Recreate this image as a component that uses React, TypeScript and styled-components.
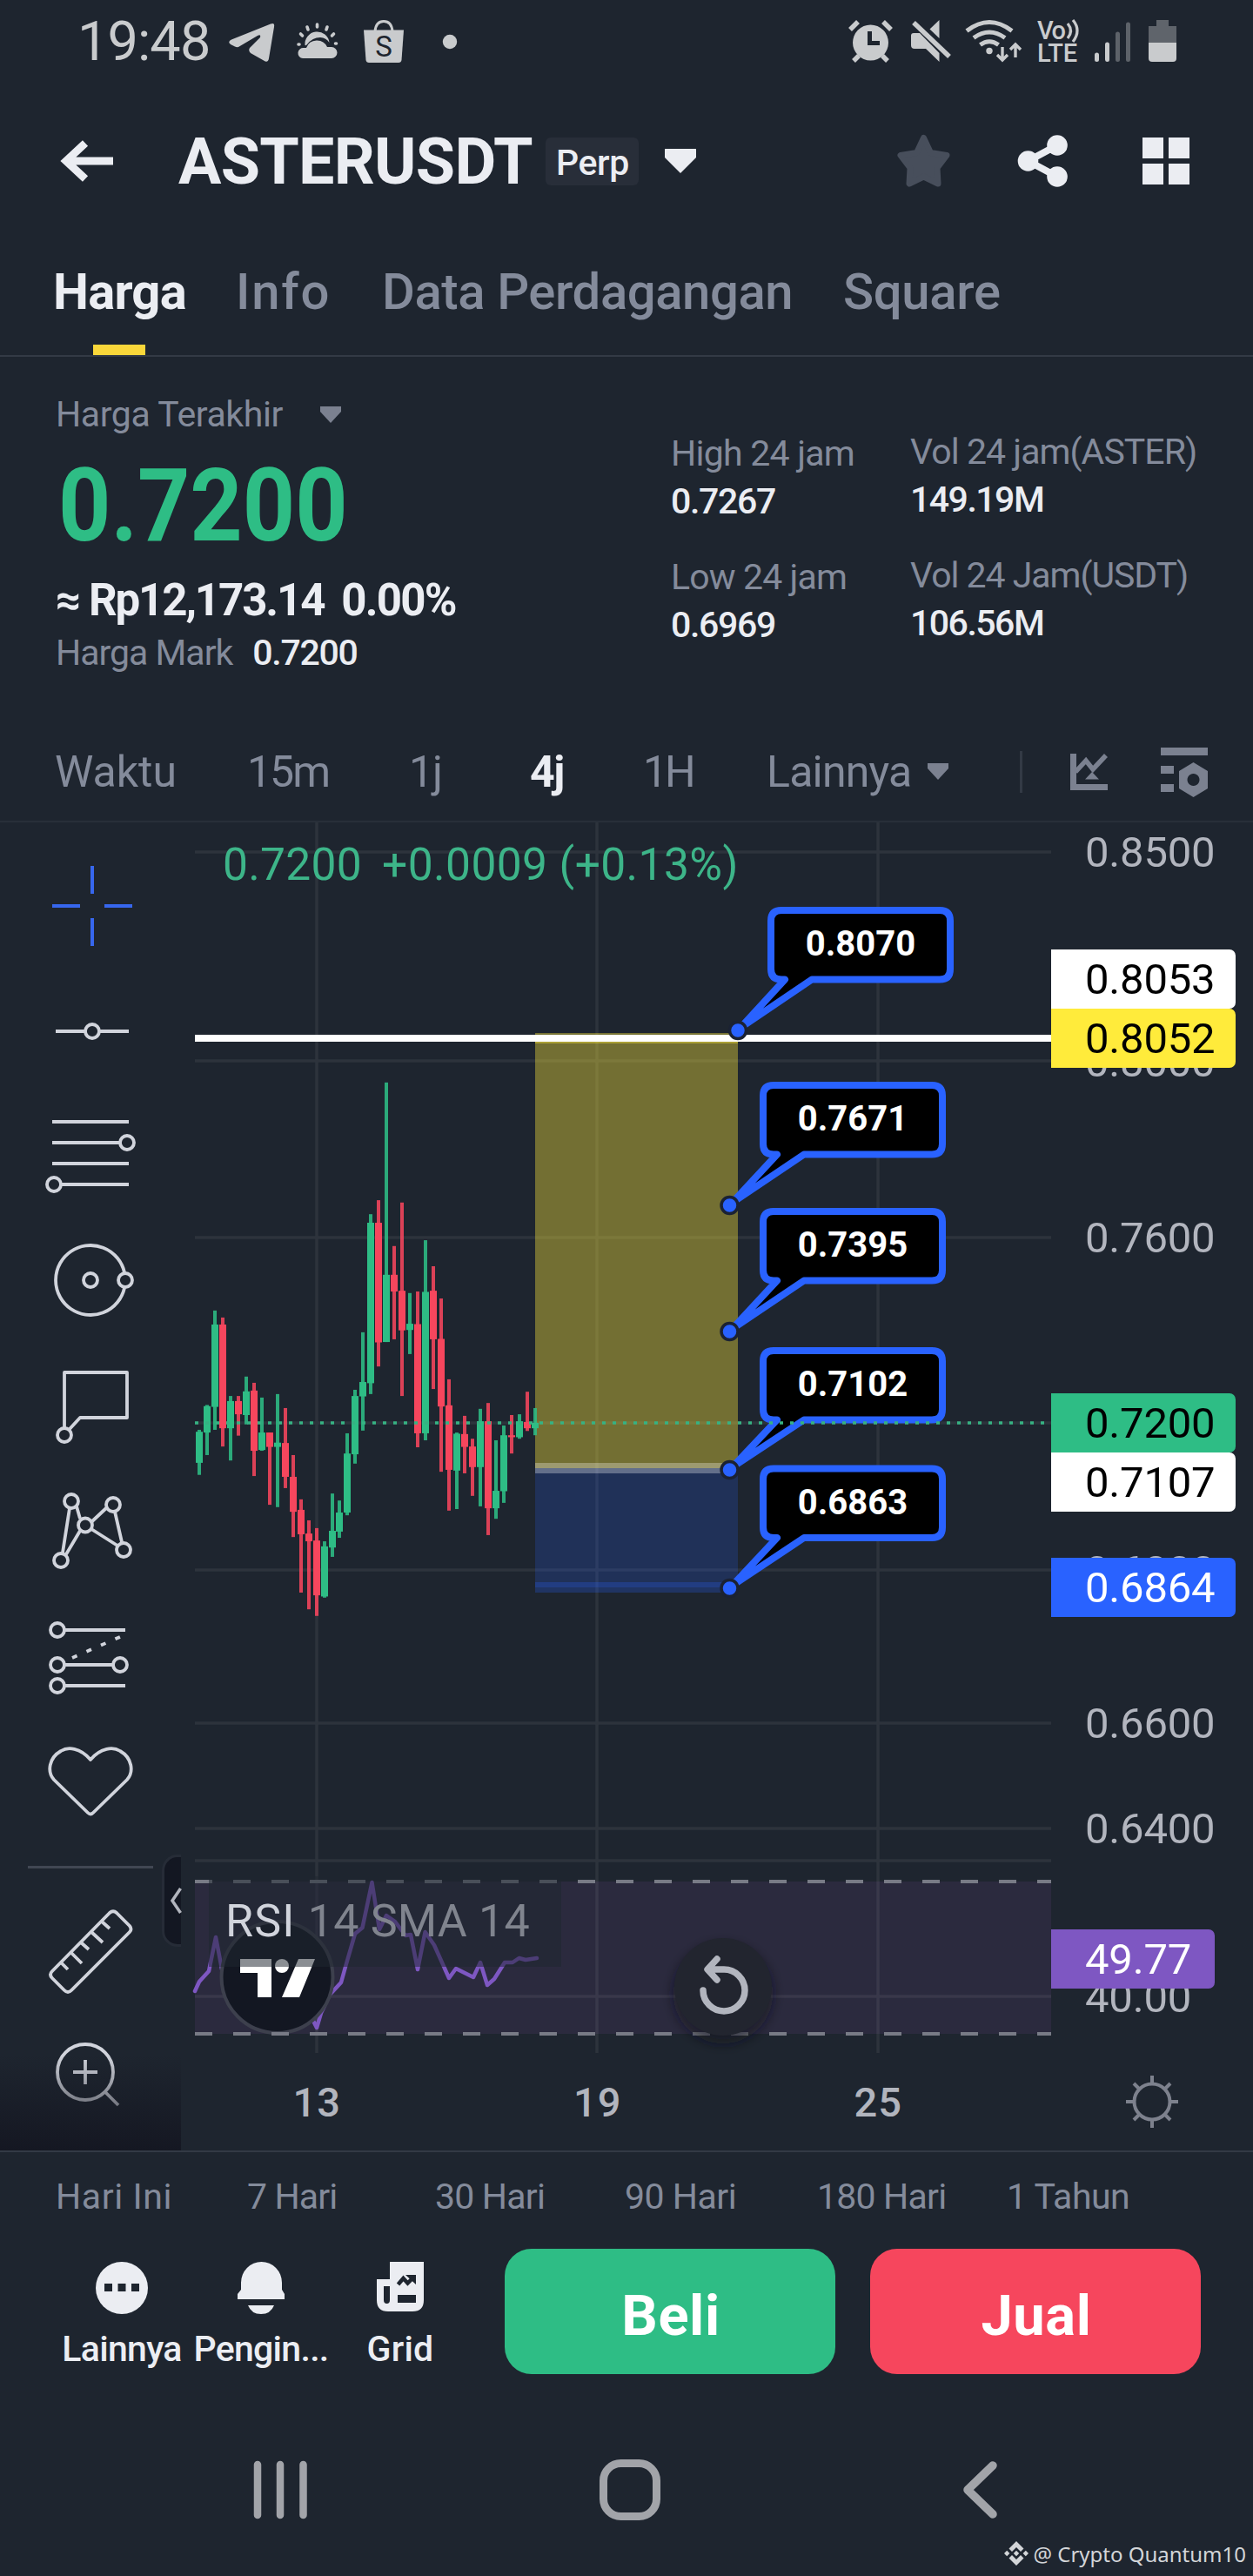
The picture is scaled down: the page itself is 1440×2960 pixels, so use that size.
import React from 'react';
import styled, { createGlobalStyle } from 'styled-components';

const c = {
  bg: '#1e252f',
  text: '#ebedf2',
  muted: '#848b9b',
  status: '#c9cbcd',
  line: '#333a45',
  up: '#2ebd85',
  down: '#f6465d',
  blue: '#2962ff',
  tool: '#d1d4dc',
  axis: '#b2b5be',
};

const GlobalStyle = createGlobalStyle`
  * { box-sizing: border-box; }
  body { margin: 0; background: ${c.bg}; }
`;

const Screen = styled.main`
  width: 1440px;
  height: 2960px;
  display: flex;
  flex-direction: column;
  overflow: hidden;
  background: ${c.bg};
  color: ${c.text};
  font-family: Roboto, "Liberation Sans", sans-serif;
  white-space: pre;
`;

const Label = styled.span<{ $size: number; $weight?: number; $ls?: number; $color?: string }>`
  font-size: ${(p) => p.$size}px;
  font-weight: ${(p) => p.$weight ?? 400};
  letter-spacing: ${(p) => p.$ls ?? 0}px;
  color: ${(p) => p.$color ?? c.text};
  line-height: 1;
`;

const Svg = styled.svg<{ $ml?: number }>`
  display: block;
  flex: none;
  overflow: visible;
  margin-left: ${(p) => p.$ml ?? 0}px;
`;

type GlyphProps = { box: [number, number, number, number]; ml?: number; children: React.ReactNode };
const Glyph = ({ box, ml, children }: GlyphProps) => (
  <Svg width={box[2]} height={box[3]} viewBox={box.join(' ')} $ml={ml} fill="none">
    {children}
  </Svg>
);

/* ---------- status bar ---------- */

const StatusBar = styled.header`
  height: 96px;
  display: flex;
  align-items: center;
  padding: 0 88px 0 89px;
`;
const Clock = styled.time`
  width: 174px;
  font-size: 63px;
  line-height: 96px;
  letter-spacing: -0.9px;
  color: ${c.status};
`;
const Spacer = styled.div`
  flex: 1;
`;

const Status = () => (
  <StatusBar>
    <Clock>19:48</Clock>
    <Glyph box={[263, 23, 52, 50]}>
      <path fill={c.status} d="M311 27.5 Q316 25.500 315 31 L309 67 Q308 73 303 69.500 L288 61 Q285 58 287 55 L299 43 Q300 39 296 41 L274 54 Q272 54.500 270 53.500 L265 51 Q261 48 266 45.500 Z" />
    </Glyph>
    <Glyph box={[341, 23, 49, 50]} ml={26}>
      <path fill={c.status} d="M348 67 A6 6 0 0 1 349 55 H352 A13 13 0 0 1 376 54 H381 A6.500 6.500 0 0 1 381 67 Z" />
      <path fill={c.status} d="M350.500 52 A14 14 0 0 1 378.500 49 Q375 43.500 368 43 Q359 43 353 51 Q352 52.500 350.500 52 Z" />
      <path stroke={c.status} strokeWidth="3.600" strokeLinecap="round" d="M364.500 28 V31 M353 31 L354 34 M376 31 L375 34 M345.500 39 L347.500 41 M383.500 39 L381.500 41 M343 51 H344 M385.500 50 H386.500" />
    </Glyph>
    <Glyph box={[417, 21, 47, 54]} ml={27}>
      <path fill={c.status} d="M418 34.500 H464 L461.500 69 Q461 72 458 72 H424 Q421 72 420.500 69 Z" />
      <path stroke={c.status} strokeWidth="3" d="M431 36 Q432 24.500 441 24.500 Q450 24.500 451 36" />
      <text x="441" y="65" textAnchor="middle" fill={c.bg} fontSize="33" fontFamily="Roboto">S</text>
    </Glyph>
    <Glyph box={[508, 30, 18, 34]} ml={44}>
      <circle cx="517" cy="47" r="8.200" fill={c.status} />
    </Glyph>
    <Spacer />
    <Glyph box={[974, 22, 53, 52]}>
      <circle cx="1000.500" cy="49" r="20.500" fill={c.status} />
      <path stroke={c.status} strokeWidth="5.500" d="M977 34 L986 25 M1015 25 L1024 34 M987 64 L981 70 M1014 64 L1020 70" />
      <path stroke={c.bg} strokeWidth="5" d="M999.500 36 V49.500 H1011" />
    </Glyph>
    <Glyph box={[1047, 22, 46, 52]} ml={20}>
      <path fill={c.status} d="M1047 41 Q1047 38 1050 38 H1057 L1079.500 61 V71 L1064 56 H1051 Q1047 56 1047 52 Z" />
      <path fill={c.status} d="M1068.500 33.500 L1079.500 23 V44 Z" />
      <path stroke={c.status} strokeWidth="5.500" d="M1050 26 L1091 65" />
    </Glyph>
    <Glyph box={[1109, 22, 66, 52]} ml={16}>
      <path stroke={c.status} strokeWidth="5" d="M1111 35.500 Q1137 15.500 1163 35.500 M1119 43.500 Q1137 30.500 1155 43.500 M1126.500 51.500 Q1137 44 1147.500 51.500" />
      <circle cx="1137" cy="58.500" r="3.700" fill={c.status} />
      <path stroke={c.status} strokeWidth="3.400" d="M1152 54 V68 M1146 63 L1152 69 L1158 63 M1167 66 V52 M1161 57 L1167 51 L1173 57" />
    </Glyph>
    <Glyph box={[1191, 22, 50, 52]} ml={16}>
      <g fill={c.status} fontFamily="Roboto" fontSize="29" fontWeight="500">
        <text x="1192" y="44.500" letterSpacing="-1.500">Vo</text>
        <text x="1192" y="71">LTE</text>
      </g>
      <path stroke={c.status} strokeWidth="3.200" d="M1227 27 Q1234 35.500 1227 44 M1233 23 Q1243 35 1233 48" />
    </Glyph>
    <Glyph box={[1257, 22, 44, 52]} ml={16}>
      <path stroke={c.status} strokeWidth="5" strokeLinecap="round" d="M1260.500 63 V68.500 M1272.500 51 V68.500" />
      <path stroke="#5d6269" strokeWidth="5" strokeLinecap="round" d="M1284.500 39 V68.500 M1296.500 28 V68.500" />
    </Glyph>
    <Glyph box={[1320, 22, 32, 52]} ml={19}>
      <path fill="#5f646b" d="M1329 23 H1343 V30 H1352 V49 H1320 V30 H1329 Z" />
      <path fill={c.status} d="M1320 49 H1352 V67 Q1352 71 1348 71 H1324 Q1320 71 1320 67 Z" />
    </Glyph>
  </StatusBar>
);

/* ---------- title bar and tabs ---------- */

const TitleBar = styled.div`
  height: 178px;
  display: flex;
  align-items: center;
  padding: 0 73px 0 70px;
`;
const Pair = styled.h1`
  margin: 0 0 0 75px;
  padding-top: 2px;
  width: 422px;
  font-size: 73.5px;
  font-weight: 700;
  letter-spacing: -0.7px;
  line-height: 90px;
`;
const Badge = styled.div`
  width: 107px;
  height: 55px;
  padding-left: 12px;
  padding-top: 5px;
  display: flex;
  align-items: center;
  border-radius: 6px;
  background: #282e39;
`;

const Title = () => (
  <TitleBar>
    <Glyph box={[70, 160, 60, 48]}>
      <path stroke={c.text} strokeWidth="9" d="M130 184 H77 M98 163.500 L76 184 L98 204.500" />
    </Glyph>
    <Pair>ASTERUSDT</Pair>
    <Badge>
      <Label $size={41} $weight={500} $ls={-0.4}>Perp</Label>
    </Badge>
    <Glyph box={[764, 170, 36, 28]} ml={30}>
      <path fill={c.text} d="M764 170 H800 V180 L782 198 L764 180 Z" />
    </Glyph>
    <Spacer />
    <Glyph box={[1031, 153, 61, 62]}>
      <path fill="#474e5b" stroke="#474e5b" strokeWidth="7" strokeLinejoin="round" d="M1061.500 157.500 L1069.500 174.500 L1088 177.500 L1077 192 L1078 210 L1061.500 202 L1045 210 L1046 192 L1035 177.500 L1053.500 174.500 Z" />
    </Glyph>
    <Glyph box={[1169, 153, 59, 62]} ml={77}>
      <circle cx="1181.500" cy="184" r="11.800" fill={c.text} />
      <circle cx="1215" cy="166" r="11.800" fill={c.text} />
      <circle cx="1215" cy="202" r="11.800" fill={c.text} />
      <path stroke={c.text} strokeWidth="8" d="M1215 166 L1181.500 184 L1215 202" />
    </Glyph>
    <Glyph box={[1313, 157, 54, 54]} ml={85}>
      <path fill={c.text} d="M1313 157 h24 v24 h-24 Z M1343 157 h24 v24 h-24 Z M1313 187 h24 v24 h-24 Z M1343 187 h24 v24 h-24 Z" />
    </Glyph>
  </TitleBar>
);

const Tabs = styled.nav`
  height: 136px;
  display: grid;
  grid-template-columns: 210px 168px 530px auto;
  padding-left: 61px;
  border-bottom: 2px solid ${c.line};
`;
const Tab = styled.a<{ $active?: boolean; $ls: number }>`
  height: 134px;
  width: max-content;
  display: flex;
  flex-direction: column;
  align-items: center;
  font-size: 58px;
  line-height: 122px;
  letter-spacing: ${(p) => p.$ls}px;
  font-weight: ${(p) => (p.$active ? 700 : 500)};
  color: ${(p) => (p.$active ? c.text : c.muted)};
`;
const Underline = styled.i`
  flex: none;
  width: 60px;
  height: 12px;
  background: #fad73a;
`;

/* ---------- ticker ---------- */

const Ticker = styled.section`
  height: 424px;
  display: grid;
  grid-template-columns: 707px 275px auto;
  padding-left: 64px;
`;
const PriceColumn = styled.div`
  display: flex;
  flex-direction: column;
  padding-top: 36px;
`;
const Line = styled.div<{ $h: number; $gap?: number }>`
  height: ${(p) => p.$h}px;
  display: flex;
  align-items: center;
  gap: ${(p) => p.$gap ?? 0}px;
`;
const LastPrice = styled.strong`
  height: 148px;
  line-height: 150px;
  margin-left: 3px;
  font-size: 117px;
  font-weight: 700;
  color: ${c.up};
  transform: scaleX(0.9);
  transform-origin: left;
`;
const StatColumn = styled.div<{ $top: number; $gap: number }>`
  display: flex;
  flex-direction: column;
  padding-top: ${(p) => p.$top}px;
  gap: ${(p) => p.$gap}px;
`;
const StatBox = styled.div`
  display: flex;
  flex-direction: column;
`;

const Stat = ({ label, value, ls, vls }: { label: string; value: string; ls: number; vls: number }) => (
  <StatBox>
    <Line $h={54}><Label $size={41} $ls={ls} $color={c.muted}>{label}</Label></Line>
    <Line $h={56}><Label $size={41} $weight={500} $ls={vls}>{value}</Label></Line>
  </StatBox>
);

const Caret = ({ ml }: { ml: number }) => (
  <Glyph box={[0, 0, 24, 19]} ml={ml}>
    <path fill="#7b8190" d="M0 0 H24 V6 L12 19 L0 6 Z" />
  </Glyph>
);

/* ---------- interval bar ---------- */

const Intervals = styled.div`
  height: 111px;
  display: grid;
  grid-template-columns: 221px 186px 139px 130px 142px 291px 57px 104px auto;
  align-items: center;
  padding: 0 0 4px 63px;
  border-bottom: 2px solid #282f39;
`;
const Cell = styled.div`
  display: flex;
  align-items: center;
`;
const Separator = styled.i`
  width: 3px;
  height: 48px;
  background: ${c.line};
`;

/* ---------- chart ---------- */

const ChartArea = styled.section`
  height: 1528px;
  display: grid;
  grid-template-columns: 208px 1000px 232px;
  border-bottom: 2px solid ${c.line};
`;
const Toolbar = styled.aside`
  position: relative;
  display: flex;
  flex-direction: column;
  padding: 24px 32px 0;
`;
const ToolRule = styled.i`
  height: 3px;
  margin: 23px 0 24px;
  background: #414753;
`;
const ToolFade = styled.i`
  position: absolute;
  left: 0;
  right: 0;
  bottom: 0;
  height: 110px;
  background: linear-gradient(rgba(20, 22, 33, 0), rgba(20, 22, 33, 0.92));
`;
const Collapse = styled.button`
  position: absolute;
  right: 0;
  top: 1186px;
  width: 22px;
  height: 106px;
  padding: 0;
  border: 3px solid #262c37;
  border-right: 0;
  border-radius: 18px 0 0 18px;
  background: #131722;
  display: flex;
  align-items: center;
  justify-content: flex-end;
`;

const toolIcons: React.ReactNode[] = [
  <path stroke="#3767ee" strokeWidth="4" d="M60 1041 H92 M120 1041 H152 M106 995 V1027 M106 1055 V1087" />,
  <>
    <path d="M64 1185 H97 M115 1185 H148" />
    <circle cx="106" cy="1185" r="8" />
  </>,
  <>
    <path d="M60 1289 H148 M60 1313 H138 M60 1337 H148 M71 1361 H148" />
    <circle cx="146" cy="1313" r="8" />
    <circle cx="62" cy="1361" r="8" />
  </>,
  <>
    <path d="M143 1462 A40 40 0 1 0 143 1480" />
    <circle cx="104" cy="1471" r="8" />
    <circle cx="144" cy="1471" r="8" />
  </>,
  <>
    <path strokeLinejoin="round" d="M74 1640 V1577 H146 V1629 H92 L80 1642" />
    <circle cx="74" cy="1649" r="8" />
  </>,
  <>
    <path d="M80 1733 L72 1784 M88 1731 L92 1745 M76 1786 L92 1759 M106 1748 L122 1733 M132 1737 L140 1772 M105 1757 L135 1776" />
    <circle cx="82" cy="1725" r="8" />
    <circle cx="130" cy="1729" r="8" />
    <circle cx="98" cy="1752.500" r="8" />
    <circle cx="142" cy="1781" r="8" />
    <circle cx="70" cy="1793" r="8" />
  </>,
  <>
    <path d="M75 1873 H144 M75 1913 H129 M75 1937 H144" />
    <path strokeDasharray="6 12" d="M83 1905 L140 1880" />
    <circle cx="66" cy="1873" r="8" />
    <circle cx="66" cy="1913" r="8" />
    <circle cx="138" cy="1913" r="8" />
    <circle cx="66" cy="1937" r="8" />
  </>,
  <path strokeLinejoin="round" d="M104 2022 C92 2008 78 2007 70 2012 C56 2020 54 2036 62 2045 L101 2083 Q104 2086 107 2083 L146 2045 C154 2036 152 2020 138 2012 C130 2007 116 2008 104 2022 Z" />,
];

const ChartTools = () => (
  <Toolbar>
    {toolIcons.map((icon, i) => (
      <Glyph key={i} box={[32, 969 + i * 144, 144, 144]}>
        <g stroke={c.tool} strokeWidth="3.800">{icon}</g>
      </Glyph>
    ))}
    <ToolRule />
    <Glyph box={[32, 2171, 144, 144]}>
      <g stroke={c.tool} strokeWidth="3.800" strokeLinejoin="round">
        <path d="M126 2198 Q130 2194.500 134 2198 L149 2213 Q152 2217 149 2220 L82 2287 Q78 2291 74 2287 L60 2273 Q56 2269 60 2265 Z" />
        <path d="M70 2255 L78 2263 M81 2243 L94 2256 M93 2232 L102 2240 M105 2220 L118 2232 M117 2208 L126 2216" />
      </g>
    </Glyph>
    <Glyph box={[32, 2315, 144, 144]}>
      <g stroke={c.tool} strokeWidth="3.800">
        <circle cx="98" cy="2381" r="32" />
        <path d="M84 2381 H112 M98 2367 V2395 M121 2404 L136 2419" />
      </g>
    </Glyph>
    <ToolFade />
    <Collapse>
      <Glyph box={[194, 2168, 14, 34]}>
        <path stroke={c.axis} strokeWidth="3.500" d="M207.500 2171 L198 2185 L207.500 2199" />
      </Glyph>
    </Collapse>
  </Toolbar>
);

const PlotColumn = styled.div`
  display: flex;
  flex-direction: column;
`;
const Pane = styled.div`
  position: relative;
  height: 1414px;
`;
const TimeAxis = styled.div`
  height: 112px;
  display: grid;
  grid-template-columns: repeat(3, 322.5px);
  align-items: center;
  justify-items: center;
  margin-left: -5px;
`;
const Legend = styled.div`
  position: absolute;
  left: 48px;
  top: 21px;
  height: 56px;
  display: flex;
  align-items: center;
  gap: 23px;
`;
const RsiLegend = styled.div`
  position: absolute;
  left: 32px;
  top: 1211px;
  width: 405px;
  height: 104px;
  padding: 0 0 0 19px;
  display: flex;
  align-items: center;
  background: rgba(31, 38, 48, 0.52);
`;
const CalloutText = styled.span<{ $x: number; $y: number }>`
  position: absolute;
  left: ${(p) => p.$x - 208}px;
  top: ${(p) => p.$y - 945}px;
  width: 214px;
  height: 84px;
  text-align: center;
  font-size: 40px;
  font-weight: 700;
  line-height: 85px;
  color: #fff;
`;

// x, high, body top, body bottom, low; rising flag (1 = close above open)
const candles: [number, number, number, number, number, number][] = [
  [57, 1037, 1042, 1122, 1153, 1], [84, 973, 976, 1044, 1102, 1], [111, 730, 766, 978, 1037, 1],
  [138, 748, 766, 1033, 1080, 0], [165, 950, 963, 1033, 1116, 1], [192, 950, 963, 997, 1052, 0],
  [219, 900, 938, 999, 1023, 1], [246, 916, 936, 1091, 1156, 0], [273, 954, 1044, 1089, 1091, 1],
  [300, 1044, 1044, 1081, 1230, 0], [327, 945, 1070, 1081, 1236, 1], [354, 981, 1071, 1158, 1187, 0],
  [381, 1102, 1158, 1248, 1313, 0], [408, 1216, 1243, 1306, 1456, 0], [435, 1270, 1304, 1324, 1499, 0],
  [462, 1290, 1322, 1463, 1516, 0], [489, 1324, 1337, 1466, 1469, 1], [516, 1201, 1297, 1340, 1364, 1],
  [540, 1219, 1250, 1299, 1315, 1], [567, 1046, 1098, 1250, 1257, 1], [594, 934, 950, 1100, 1124, 1],
  [621, 786, 914, 951, 1039, 1], [648, 482, 504, 917, 945, 1], [675, 446, 504, 812, 874, 0],
  [702, 143, 638, 811, 811, 1], [729, 564, 638, 681, 804, 0], [756, 452, 679, 781, 950, 0],
  [783, 685, 764, 780, 842, 1], [810, 681, 765, 1046, 1082, 0], [837, 549, 682, 1046, 1064, 1],
  [864, 616, 679, 804, 932, 0], [891, 699, 803, 977, 1145, 0], [918, 907, 974, 1140, 1245, 0],
  [945, 1044, 1047, 1142, 1241, 1], [972, 1001, 1048, 1081, 1149, 0], [999, 1060, 1080, 1133, 1207, 0],
  [1026, 983, 1015, 1133, 1234, 1], [1053, 968, 1015, 1239, 1308, 0], [1080, 1064, 1194, 1239, 1266, 1],
  [1107, 1026, 1051, 1195, 1225, 1], [1134, 999, 1051, 1056, 1098, 0], [1160, 997, 1015, 1056, 1060, 1],
  [1187, 939, 1017, 1033, 1040, 0], [1215, 981, 1019, 1033, 1051, 1],
];
const cx = (v: number) => Math.round(v / 3 + 210);
const cy = (v: number) => v / 2.24 + 1180;

const rsi =
  '224,2288 229,2277 240,2265 248,2226 256,2268 300,2300 345,2310 358,2318 364,2330 369,2313 379,2292 392,2278 397,2260 408,2222 416.5,2215 427.5,2163 436,2217 444,2201 454,2208 466,2224 472,2223 480,2263 488.6,2220 499,2235 516,2273 524,2262 544,2272 552,2255 560,2281 568,2274 580,2255 589,2255 596.5,2250 604,2252 617,2250';

const callouts = [
  { x: 882, y: 1042, px: 848, py: 1184, text: '0.8070' },
  { x: 873, y: 1243, px: 838.5, py: 1385, text: '0.7671' },
  { x: 873, y: 1388, px: 838.5, py: 1530, text: '0.7395' },
  { x: 873, y: 1548, px: 838.5, py: 1689, text: '0.7102' },
  { x: 873, y: 1683.5, px: 838.5, py: 1825, text: '0.6863' },
];

const calloutPath = (x: number, y: number, px: number, py: number) => {
  const l = x + 4, r = x + 210, t = y + 4, b = y + 83.5, q = 12;
  return `M${l + q} ${t} H${r - q} Q${r} ${t} ${r} ${t + q} V${b - q} Q${r} ${b} ${r - q} ${b} H${x + 51} L${px + 3} ${py - 3} L${x + 20} ${b} H${l + q} Q${l} ${b} ${l} ${b - q} V${t + q} Q${l} ${t} ${l + q} ${t} Z`;
};

const Canvas = () => (
  <Svg width="1000" height="1414" viewBox="208 945 1000 1414" fill="none">
    <rect x="224" y="2162" width="984" height="175" fill="#2b2a3e" />
    <path stroke="#fff" strokeOpacity="0.065" strokeWidth="3.500" d="M364 945 V2359 M686 945 V2359 M1009 945 V2359 M224 979 H1208 M224 1219 H1208 M224 1422 H1208 M224 1635 H1208 M224 1804 H1208 M224 1980 H1208 M224 2101 H1208 M224 2138 H1208 M224 2294 H1208" />
    <path stroke="#787b86" strokeWidth="4" strokeDasharray="20 24" d="M224 2162 H1208 M224 2337 H1208" />
    <rect x="615" y="1193" width="233" height="494" fill="#ffeb3b" fillOpacity="0.38" />
    <rect x="615" y="1687" width="233" height="137" fill="#2962ff" fillOpacity="0.2" />
    <path stroke="#ffeb3b" strokeOpacity="0.4" strokeWidth="12" d="M615 1193 H848" />
    <path stroke="#fff" strokeOpacity="0.3" strokeWidth="12" d="M615 1687 H840" />
    <path stroke="#2962ff" strokeOpacity="0.25" strokeWidth="12" d="M615 1824 H840" />
    {candles.map(([x, h, t, b, l, up]) => (
      <g key={x} fill={up ? c.up : c.down}>
        <rect x={cx(x) - 2} y={cy(h)} width="4" height={cy(l) - cy(h)} fillOpacity="0.88" />
        <rect x={cx(x) - 4} y={cy(t)} width="8" height={cy(b) - cy(t)} />
      </g>
    ))}
    <path stroke="#fff" strokeWidth="8" d="M224 1193 H1208" />
    {callouts.map((o) => (
      <g key={o.text}>
        <path d={calloutPath(o.x, o.y, o.px, o.py)} fill="#000" stroke={c.blue} strokeWidth="8" strokeLinejoin="round" />
        <circle cx={o.px} cy={o.py} r="9.500" fill={c.blue} stroke="#1b2233" strokeWidth="3.500" />
      </g>
    ))}
    <path stroke="#36b283" strokeWidth="3.500" strokeDasharray="4 8" d="M224 1635 H1205" />
    <polyline points={rsi} stroke="#7e57c2" strokeWidth="4.500" strokeLinejoin="round" strokeLinecap="round" />
    <circle cx="318.500" cy="2272" r="64" fill="#131722" stroke="#3d404d" strokeWidth="4" />
    <path stroke="#787b86" strokeWidth="4" strokeDasharray="20 24" d="M224 2337 H400" />
    <path fill="#fff" d="M276 2251 H312 V2295 H296 V2267 H276 Z M343 2251 H362 L344 2295 H324 Z" />
    <circle cx="324" cy="2259" r="8" fill="#fff" />
    <defs>
      <filter id="soft" x="-30%" y="-30%" width="160%" height="160%">
        <feGaussianBlur stdDeviation="7" />
      </filter>
    </defs>
    <circle cx="831" cy="2291" r="57" fill="#14171f" fillOpacity="0.6" filter="url(#soft)" />
    <circle cx="831" cy="2283" r="56" fill="#22252f" />
    <path stroke={c.axis} strokeWidth="7.500" strokeLinecap="round" strokeLinejoin="round" d="M824 2251 L813 2263 L824 2275 M814 2263 H832 A24 24 0 1 1 808 2287" />
  </Svg>
);

/* ---------- price axis ---------- */

const PriceColumnAxis = styled.div`
  display: flex;
  flex-direction: column;
`;
const PriceScale = styled.div`
  position: relative;
  height: 1414px;
`;
const Tick = styled.span<{ $y: number }>`
  position: absolute;
  left: 39px;
  top: ${(p) => p.$y - 945 - 34}px;
  font-size: 49px;
  line-height: 68px;
  letter-spacing: -0.2px;
  color: ${c.axis};
`;
const PriceTag = styled.span<{ $y: number; $bg: string; $fg: string; $w?: number }>`
  position: absolute;
  left: 0;
  top: ${(p) => p.$y - 945}px;
  width: ${(p) => p.$w ?? 212}px;
  height: 68px;
  padding-left: 39px;
  border-radius: 0 7px 7px 0;
  font-size: 49px;
  line-height: 70px;
  letter-spacing: -0.2px;
  background: ${(p) => p.$bg};
  color: ${(p) => p.$fg};
`;
const ScaleSettings = styled.div`
  height: 112px;
  display: flex;
  align-items: center;
  justify-content: center;
`;

const ticks: [string, number][] = [
  ['0.8500', 980], ['0.8000', 1221], ['0.7600', 1423], ['0.6800', 1806],
  ['0.6600', 1981], ['0.6400', 2102], ['40.00', 2296],
];

const PriceAxis = () => (
  <PriceColumnAxis>
    <PriceScale>
      {ticks.map(([t, y]) => <Tick key={t} $y={y}>{t}</Tick>)}
      <PriceTag $y={1091} $bg="#fff" $fg="#000">0.8053</PriceTag>
      <PriceTag $y={1159} $bg="#ffeb3b" $fg="#000">0.8052</PriceTag>
      <PriceTag $y={1601} $bg={c.up} $fg="#000">0.7200</PriceTag>
      <PriceTag $y={1669} $bg="#fff" $fg="#000">0.7107</PriceTag>
      <PriceTag $y={1790} $bg={c.blue} $fg="#fff">0.6864</PriceTag>
      <PriceTag $y={2217} $bg="#7e57c2" $fg="#fff" $w={188}>49.77</PriceTag>
    </PriceScale>
    <ScaleSettings>
      <Glyph box={[1292, 2383, 64, 64]}>
        <g stroke="#7d818d" strokeWidth="4">
          <circle cx="1324" cy="2415" r="20.500" />
          <path d="M1324 2394 V2385 M1324 2436 V2445 M1303 2415 H1294 M1345 2415 H1354 M1309 2400 L1303 2394 M1339 2400 L1345 2394 M1309 2430 L1303 2436 M1339 2430 L1345 2436" />
        </g>
      </Glyph>
    </ScaleSettings>
  </PriceColumnAxis>
);

/* ---------- footer ---------- */

const Periods = styled.div`
  height: 103px;
  display: grid;
  grid-template-columns: 220px 216px 218px 221px 218px auto;
  align-items: center;
  padding-left: 64px;
`;
const ActionBar = styled.div`
  height: 160px;
  display: flex;
  align-items: center;
  padding-left: 60px;
`;
const Action = styled.button`
  width: 160px;
  height: 160px;
  padding: 23px 0 0;
  border: 0;
  background: none;
  font: inherit;
  display: flex;
  flex-direction: column;
  align-items: center;
  gap: 20px;
`;
const TradeButton = styled.button<{ $bg: string }>`
  width: 380px;
  height: 144px;
  margin-left: 40px;
  padding: 9px 0 0 2px;
  border: 0;
  border-radius: 31px;
  background: ${(p) => p.$bg};
  font: 700 65px Roboto, "Liberation Sans", sans-serif;
  letter-spacing: 0.6px;
  color: #fff;
`;
const SystemNav = styled.nav`
  height: 94px;
  margin: 78px 0 0 121px;
  display: grid;
  grid-template-columns: repeat(3, 402px);
  align-items: center;
  justify-items: center;
`;
const Watermark = styled.footer`
  height: 52px;
  display: flex;
  align-items: center;
  justify-content: flex-end;
  gap: 5px;
  padding-right: 8px;
  font: 24px "Noto Sans", sans-serif;
  color: #d3d5d8;
`;

const nav = '#a2a4a9';
const periods: [string, number][] = [
  ['Hari Ini', 0.6], ['7 Hari', -0.9], ['30 Hari', -0.8], ['90 Hari', -0.5], ['180 Hari', -0.8], ['1 Tahun', -0.5],
];

export default function App() {
  return (
    <Screen>
      <GlobalStyle />
      <Status />
      <Title />
      <Tabs>
        <Tab $active $ls={-0.8}>Harga<Underline /></Tab>
        <Tab $ls={1.8}>Info</Tab>
        <Tab $ls={-0.4}>Data Perdagangan</Tab>
        <Tab $ls={-0.3}>Square</Tab>
      </Tabs>

      <Ticker>
        <PriceColumn>
          <Line $h={60}>
            <Label $size={41} $ls={-0.4} $color={c.muted}>Harga Terakhir</Label>
            <Caret ml={43} />
          </Line>
          <LastPrice>0.7200</LastPrice>
          <Line $h={70} $gap={20}>
            <Label $size={51} $weight={700} $ls={-2.1}>≈ Rp12,173.14</Label>
            <Label $size={51} $weight={700} $ls={-1.8}>0.00%</Label>
          </Line>
          <Line $h={53} $gap={23}>
            <Label $size={41} $ls={-1} $color={c.muted}>Harga Mark</Label>
            <Label $size={41} $weight={500} $ls={-1.3}>0.7200</Label>
          </Line>
        </PriceColumn>
        <StatColumn $top={84} $gap={32}>
          <Stat label="High 24 jam" value="0.7267" ls={-0.75} vls={-1.3} />
          <Stat label="Low 24 jam" value="0.6969" ls={-0.87} vls={-1.3} />
        </StatColumn>
        <StatColumn $top={82} $gap={32}>
          <Stat label="Vol 24 jam(ASTER)" value="149.19M" ls={-0.95} vls={-1.5} />
          <Stat label="Vol 24 Jam(USDT)" value="106.56M" ls={-1.04} vls={-1.5} />
        </StatColumn>
      </Ticker>

      <Intervals>
        <Label $size={50} $color={c.muted}>Waktu</Label>
        <Label $size={50} $ls={-2} $color={c.muted}>15m</Label>
        <Label $size={50} $ls={-1} $color={c.muted}>1j</Label>
        <Label $size={50} $weight={700} $ls={-1.5}>4j</Label>
        <Label $size={50} $ls={-3} $color={c.muted}>1H</Label>
        <Cell>
          <Label $size={50} $ls={-0.8} $color={c.muted}>Lainnya</Label>
          <Caret ml={19} />
        </Cell>
        <Separator />
        <Glyph box={[1229, 861, 44, 44]}>
          <path stroke="#7b8190" strokeWidth="7" d="M1233.500 862 V900.500 H1273" />
          <path stroke="#7b8190" strokeWidth="5.500" d="M1236 883 L1248 870 L1256 880 L1271 864" />
          <path fill="#7b8190" d="M1255 883 L1263 891.500 H1247 Z" />
        </Glyph>
        <Glyph box={[1333, 856, 56, 58]}>
          <path fill="#7b8190" d="M1334 857 h54 v9 h-54 Z M1334 878 h15 v9 h-15 Z M1334 899 h15 v9 h-15 Z" />
          <path fill="#7b8190" fillRule="evenodd" d="M1371.500 874 L1388 884 V904 L1371.500 914 L1355 904 V884 Z M1371.500 887 a7 7 0 1 0 0.010 0 Z" />
        </Glyph>
      </Intervals>

      <ChartArea>
        <ChartTools />
        <PlotColumn>
          <Pane>
            <Canvas />
            <Legend>
              <Label $size={51.5} $ls={0.3} $color="#3db589">0.7200</Label>
              <Label $size={51.5} $ls={0.4} $color="#3db589">+0.0009 (+0.13%)</Label>
            </Legend>
            <RsiLegend>
              <Label $size={52} $ls={1.2} $color={c.tool}>RSI </Label>
              <Label $size={52} $ls={0.2} $color="#80848e">14 SMA 14</Label>
            </RsiLegend>
            {callouts.map((o) => (
              <CalloutText key={o.text} $x={o.x} $y={o.y}>{o.text}</CalloutText>
            ))}
          </Pane>
          <TimeAxis>
            <Label $size={47} $weight={500} $ls={1} $color={c.axis}>13</Label>
            <Label $size={47} $weight={500} $ls={1} $color={c.axis}>19</Label>
            <Label $size={47} $weight={500} $ls={1} $color={c.axis}>25</Label>
          </TimeAxis>
        </PlotColumn>
        <PriceAxis />
      </ChartArea>

      <Periods>
        {periods.map(([p, ls]) => (
          <Label key={p} $size={41} $ls={ls} $color={c.muted}>{p}</Label>
        ))}
      </Periods>

      <ActionBar>
        <Action>
          <Glyph box={[110, 2599, 60, 60]}>
            <circle cx="140" cy="2629" r="30" fill={c.text} />
            <path fill={c.bg} d="M120 2624 h9 v9 h-9 Z M135.500 2624 h9 v9 h-9 Z M151 2624 h9 v9 h-9 Z" />
          </Glyph>
          <Label $size={41} $weight={500} $ls={-0.7}>Lainnya</Label>
        </Action>
        <Action>
          <Glyph box={[270, 2599, 60, 60]}>
            <path fill={c.text} d="M277 2623 A23.500 24 0 0 1 324 2623 V2631 L327 2636 V2642 H273 V2636 L277 2631 Z M285 2649 H315 Q311 2659 300 2659 Q289 2659 285 2649 Z" />
          </Glyph>
          <Label $size={41} $weight={500} $ls={-0.7}>Pengin...</Label>
        </Action>
        <Action>
          <Glyph box={[430, 2599, 60, 60]}>
            <path fill={c.text} d="M448 2599 H487 V2643 Q487 2656 474 2656 H446 Q433 2656 433 2643 V2619 H448 Z" />
            <path fill={c.bg} d="M441 2627 H448 V2643 Q448 2647 444.500 2647 Q441 2647 441 2643 Z M457 2637 H478 V2646 H457 Z M466 2614 H478 V2625 Z" />
            <path stroke={c.bg} strokeWidth="4.500" d="M457.500 2625 L463.500 2618 L468.500 2623.500 L475 2617" />
          </Glyph>
          <Label $size={41} $weight={500} $ls={0.2}>Grid</Label>
        </Action>
        <TradeButton $bg={c.up}>Beli</TradeButton>
        <TradeButton $bg={c.down}>Jual</TradeButton>
      </ActionBar>

      <SystemNav>
        <Glyph box={[288, 2824, 68, 74]}>
          <path stroke={nav} strokeWidth="8.500" strokeLinecap="round" d="M296 2832 V2890 M322 2832 V2890 M348.500 2832 V2890" />
        </Glyph>
        <Glyph box={[688, 2825, 72, 72]}>
          <rect x="693.500" y="2830.500" width="61" height="61" rx="20" stroke={nav} strokeWidth="9" />
        </Glyph>
        <Glyph box={[1102, 2825, 48, 72]}>
          <path stroke={nav} strokeWidth="9.500" strokeLinecap="round" strokeLinejoin="round" d="M1141 2833 L1112 2861 L1141 2889" />
        </Glyph>
      </SystemNav>
      <Watermark>
        <Glyph box={[0, 0, 28, 28]}>
          <path fill="#d3d5d8" d="M14 0 L22.500 8.500 L19 12 L14 7 L9 12 L5.500 8.500 Z M14 28 L22.500 19.500 L19 16 L14 21 L9 16 L5.500 19.500 Z M3.200 10.800 L6.400 14 L3.200 17.200 L0 14 Z M24.800 10.800 L28 14 L24.800 17.200 L21.600 14 Z M14 10.800 L17.200 14 L14 17.200 L10.800 14 Z" />
        </Glyph>
        <span>@ Crypto Quantum10</span>
      </Watermark>
    </Screen>
  );
}
